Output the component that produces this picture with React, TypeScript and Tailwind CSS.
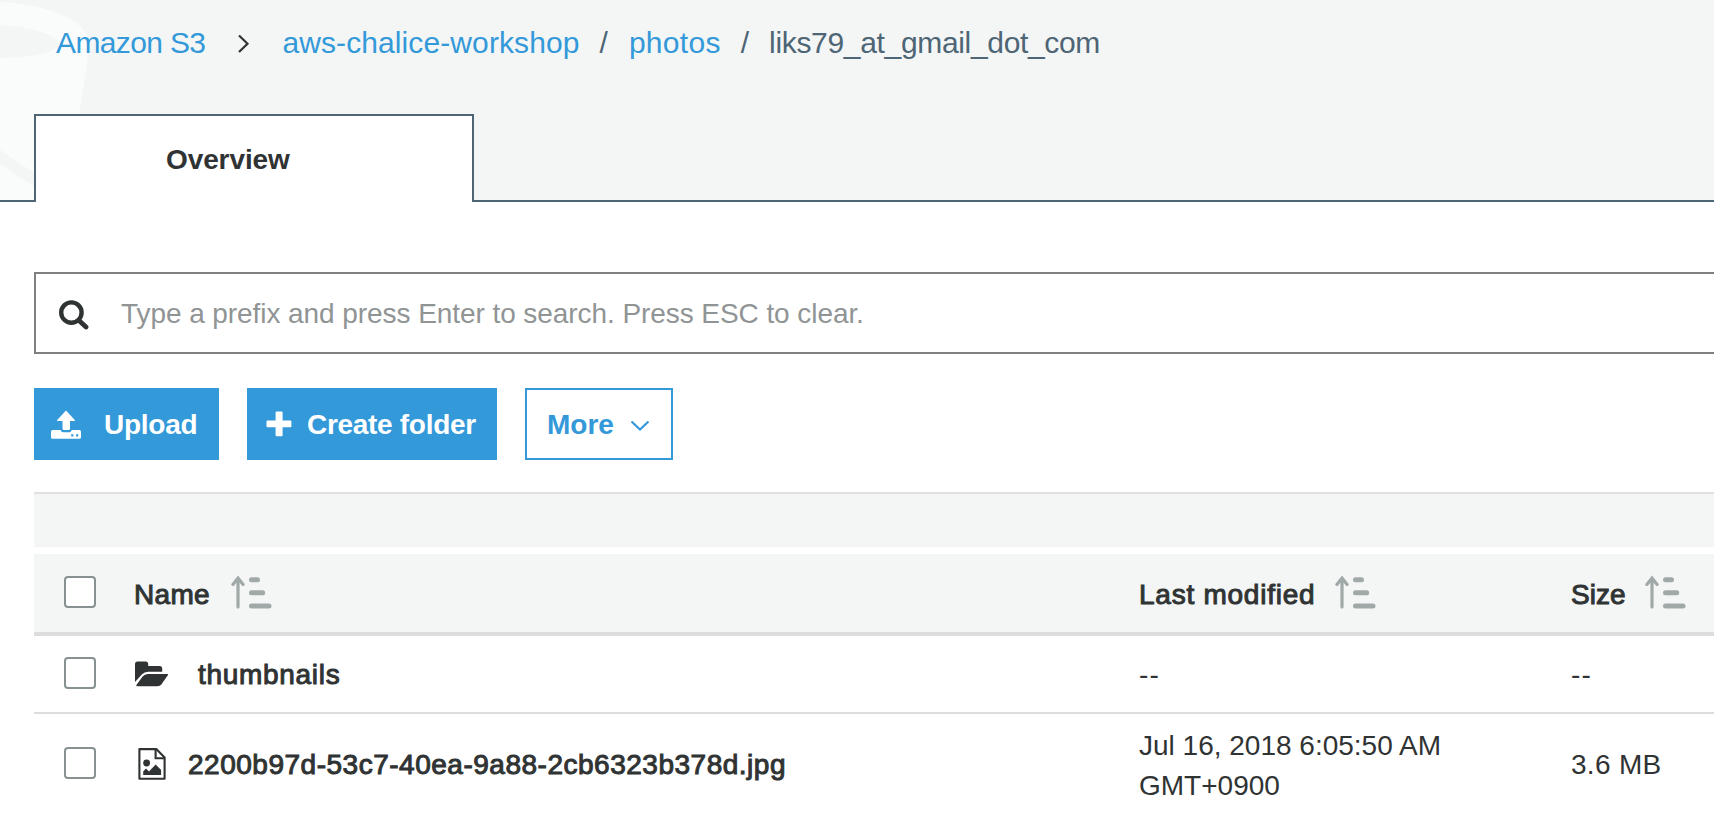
import type { ReactNode } from "react";

function SortIcon({ className = "" }: { className?: string }) {
  return (
    <svg width="42" height="34" viewBox="0 0 42 34" fill="none" className={`-mt-0.5 shrink-0 ${className}`}>
      <path d="M7 32V3M1.9 9.4L7 3L12.1 9.4" stroke="#a1a8a8" strokeWidth="3.2" strokeLinecap="round" strokeLinejoin="miter" />
      <path d="M20.5 4.8H26.5M20.5 17.8H31.7M20.5 30.9H38" stroke="#a1a8a8" strokeWidth="5" strokeLinecap="round" />
    </svg>
  );
}

function UploadIcon() {
  return (
    <svg width="30" height="30" viewBox="0 0 30 30" fill="#fff" className="mt-px shrink-0">
      <path d="M15 0.5L24 10.2Q24.2 11 23.4 11H19V18.8Q19 20 17.8 20H12.7Q11.5 20 11.5 18.8V11H6.6Q5.8 11 6 10.2Z" />
      <path
        fillRule="evenodd"
        d="M1.6 20H9.6Q10.4 22.2 12.2 22.2H18.3Q20 22.2 20.8 20H28.4Q30 20 30 21.6V27.3Q30 28.8 28.4 28.8H1.6Q0 28.8 0 27.3V21.6Q0 20 1.6 20ZM20.2 24.2V26.4H22.4V24.2ZM25 24.2V26.4H27.2V24.2Z"
      />
    </svg>
  );
}

function PlusIcon() {
  return (
    <svg width="26" height="26" viewBox="0 0 26 26" fill="#fff" className="shrink-0">
      <path d="M10.6 0.5H15.6Q16.6 0.5 16.6 1.5V9.6H24.4Q25.4 9.6 25.4 10.6V15.2Q25.4 16.2 24.4 16.2H16.6V24.2Q16.6 25.2 15.6 25.2H10.6Q9.6 25.2 9.6 24.2V16.2H1.5Q0.5 16.2 0.5 15.2V10.6Q0.5 9.6 1.5 9.6H9.6V1.5Q9.6 0.5 10.6 0.5Z" />
    </svg>
  );
}

function FolderIcon() {
  return (
    <svg width="34" height="26" viewBox="0 0 34 26" fill="#303333" className="shrink-0">
      <path d="M0 21V3.2Q0 0.6 2.6 0.6H10.6Q13.2 0.6 13.2 3.2V4.9H24.6Q27.2 4.9 27.2 7.5V10.7H13.2Q9.4 10.7 6.8 13.5Z" />
      <path d="M12.8 13H32.2Q33.6 13 32.8 14.3L26.5 23.2Q25 25.3 22.4 25.3H2.2Q0.6 25.3 1.6 23.8L7.4 15.8Q9.6 13 12.8 13Z" />
    </svg>
  );
}

function ImageFileIcon() {
  return (
    <svg width="28" height="32" viewBox="0 0 28 32" fill="none" className="shrink-0">
      <path d="M2 1.1H18.3L26.6 9.6V30.7H1.4V1.1Z" stroke="#303333" strokeWidth="2.1" strokeLinejoin="round" />
      <path d="M17.6 1.5V10.3H26.4" stroke="#303333" strokeWidth="2.1" />
      <circle cx="8.6" cy="15" r="3.4" fill="#303333" />
      <path d="M5.2 27V23.4L8 20.6L11 23.6L17.6 16.6L23.1 22V27Z" fill="#303333" />
    </svg>
  );
}

function BucketWatermark() {
  return (
    <svg width="100" height="200" viewBox="0 0 100 200" className="absolute left-0 top-0">
      <path d="M0 2C52 5 94 22 89 50L66 200H0Z" fill="#fafcfb" />
      <path d="M0 25C34 27 58 36 58 44C58 52 34 58 0 58Z" fill="#f4f6f6" />
      <path d="M0 150L40 177V190L0 164Z" fill="#f4f6f6" />
    </svg>
  );
}

function Checkbox() {
  return <span className="-mt-0.5 block size-8 shrink-0 rounded-[4px] border-2 border-[#879191] bg-white" />;
}

function Row({ name, modified, size, className }: { name: ReactNode; modified: ReactNode; size: ReactNode; className: string }) {
  return (
    <div className={`grid grid-cols-[66px_1006px_432px_1fr] items-center pl-[30px] leading-10 ${className}`}>
      <Checkbox />
      <div>{name}</div>
      <div>{modified}</div>
      <div>{size}</div>
    </div>
  );
}

export default function App() {
  return (
    <div className="h-[840px] w-full overflow-hidden bg-white font-['Liberation_Sans',Arial,sans-serif] text-[28px] whitespace-nowrap text-[#303333]">
      <header className="relative flex h-[202px] flex-col justify-between border-b-2 border-[#4d6575] bg-[#f4f6f6]">
        <BucketWatermark />
        <nav className="relative flex pl-14 pt-[25px] text-[30px] leading-9 text-[#3399d9]">
          <a className="tracking-[-0.63px]">Amazon S3</a>
          <svg width="14" height="20" viewBox="0 0 14 20" fill="none" className="ml-8 mt-[9px]">
            <path d="M2 1.5L10.5 9.7L2 18" stroke="#303333" strokeWidth="2.2" />
          </svg>
          <a className="ml-[31px] tracking-[0.1px]">aws-chalice-workshop</a>
          <span className="ml-5 text-[#4d6575]">/</span>
          <a className="ml-[21px] tracking-[0.3px]">photos</a>
          <span className="ml-5 text-[#4d6575]">/</span>
          <span className="ml-[20px] tracking-[-0.33px] text-[#4d6575]">liks79_at_gmail_dot_com</span>
        </nav>
        <div className="relative -mb-0.5 ml-[34px] flex h-[88px] w-[440px] items-center rounded-b-[2px] border-2 border-b-0 border-[#4d6575] bg-white pl-[130px] pt-0.5 font-bold tracking-[-0.1px]">
          Overview
        </div>
      </header>

      <main className="pl-[34px]">
        <div className="mt-[70px] flex h-[82px] items-center border-2 border-r-0 border-[#808080] pl-[23px]">
          <svg width="30" height="30" viewBox="0 0 30 30" fill="none" className="mt-1 shrink-0">
            <circle cx="12.4" cy="12.6" r="10.2" stroke="#303333" strokeWidth="4.4" />
            <path d="M20 20.4L27 27" stroke="#303333" strokeWidth="4.8" strokeLinecap="round" />
          </svg>
          <span className="ml-8 mt-0.5 tracking-[-0.07px] text-[#909494]">Type a prefix and press Enter to search. Press ESC to clear.</span>
        </div>

        <div className="mt-[34px] flex h-[72px] gap-7 font-bold text-white">
          <button className="flex w-[185px] items-center bg-[#3399d9] pl-[17px] text-left">
            <UploadIcon />
            <span className="ml-[23px] mt-0.5 tracking-[-0.25px]">Upload</span>
          </button>
          <button className="flex w-[250px] items-center bg-[#3399d9] pl-[19px] text-left">
            <PlusIcon />
            <span className="ml-[15px] mt-0.5 tracking-[-0.3px]">Create folder</span>
          </button>
          <button className="flex w-[148px] items-center border-2 border-[#3399d9] pl-5 text-[#3399d9]">
            <span className="mt-0.5">More</span>
            <svg width="20" height="12" viewBox="0 0 20 12" fill="none" className="ml-4 mt-1">
              <path d="M1.5 1.5L10 9.5L18.5 1.5" stroke="#3399d9" strokeWidth="2.2" />
            </svg>
          </button>
        </div>

        <section className="mt-8">
          <div className="h-[55px] border-t-2 border-[#dfe1e1] bg-[#f4f6f6]" />
          <Row
            className="mt-[7px] h-[82px] border-b-4 border-[#dcdddd] bg-[#f4f6f6]"
            name={
              <div className="flex items-center pl-1">
                <span className="mt-[3px] tracking-[0.3px] [-webkit-text-stroke:1px_#303333]">Name</span>
                <SortIcon className="ml-[21px]" />
              </div>
            }
            modified={
              <div className="flex items-center pl-[3px]">
                <span className="mt-[3px] tracking-[0.75px] [-webkit-text-stroke:1px_#303333]">Last modified</span>
                <SortIcon className="ml-[20px]" />
              </div>
            }
            size={
              <div className="flex items-center pl-[3px]">
                <span className="mt-[3px] [-webkit-text-stroke:1px_#303333]">Size</span>
                <SortIcon className="ml-[20px]" />
              </div>
            }
          />
          <Row
            className="h-[78px] border-b-2 border-[#dcdddd]"
            name={
              <div className="flex items-center pl-[5px]">
                <FolderIcon />
                <span className="ml-[29px] mt-px tracking-[0.7px] [-webkit-text-stroke:1px_#303333]">thumbnails</span>
              </div>
            }
            modified={<div className="pl-[3px] pt-0.5 tracking-[1.2px]">--</div>}
            size={<div className="pl-[3px] pt-0.5 tracking-[1.2px]">--</div>}
          />
          <Row
            className="h-[100px]"
            name={
              <div className="flex items-center pl-2">
                <ImageFileIcon />
                <span className="ml-[22px] mt-px tracking-[0.51px] [-webkit-text-stroke:1px_#303333]">2200b97d-53c7-40ea-9a88-2cb6323b378d.jpg</span>
              </div>
            }
            modified={
              <div className="pl-[3px] pt-[3px]">
                Jul 16, 2018 6:05:50 AM
                <br />
                GMT+0900
              </div>
            }
            size={<div className="pl-[3px] pt-0.5 tracking-[0.3px]">3.6 MB</div>}
          />
        </section>
      </main>
    </div>
  );
}
